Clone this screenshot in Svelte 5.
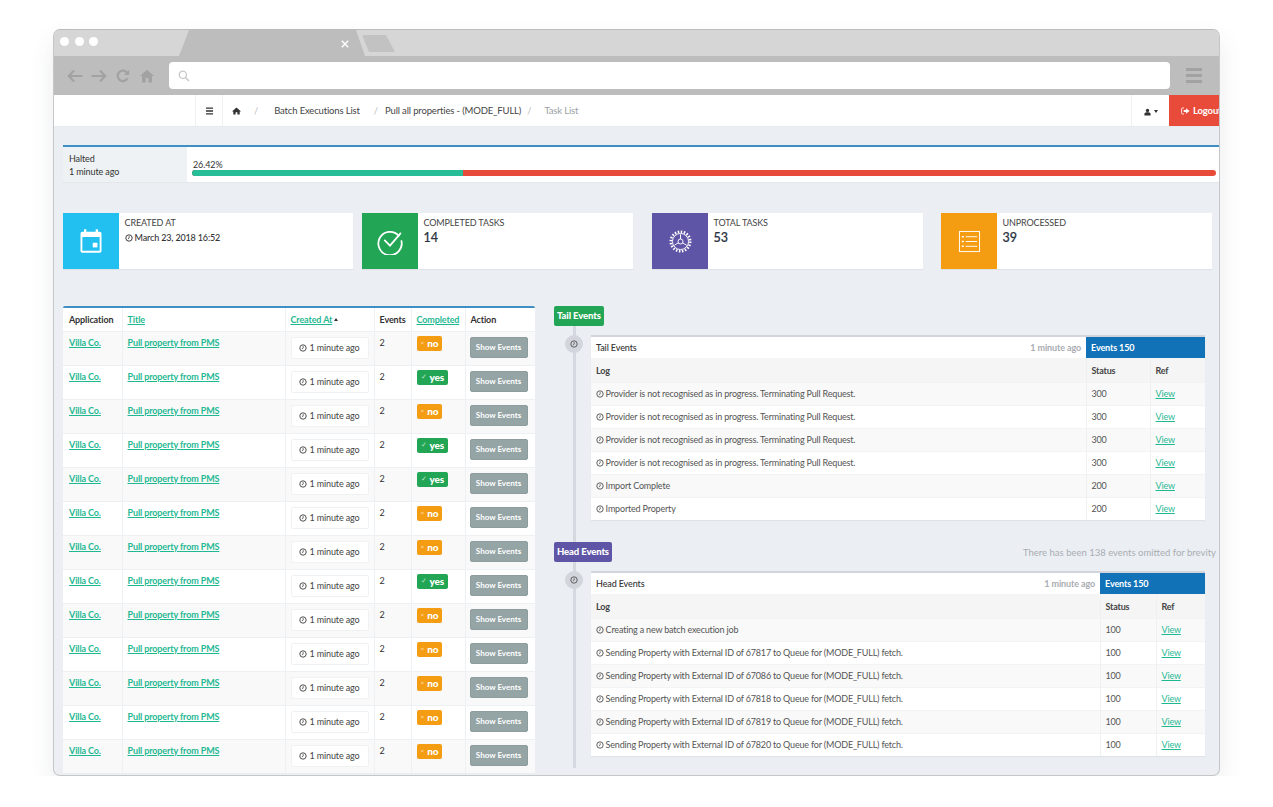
<script lang="ts">
  const stats = [
    { label: 'Completed Tasks', value: '14', tone: 'green', icon: 'check' },
    { label: 'Total Tasks', value: '53', tone: 'purple', icon: 'gear' },
    { label: 'Unprocessed', value: '39', tone: 'orange', icon: 'list' },
  ];

  const completed = [false, true, false, true, true, false, false, true, false, false, false, false, false];

  const terminating = 'Provider is not recognised as in progress. Terminating Pull Request.';
  const tailRows = [
    { log: terminating, status: 300 },
    { log: terminating, status: 300 },
    { log: terminating, status: 300 },
    { log: terminating, status: 300 },
    { log: 'Import Complete', status: 200 },
    { log: 'Imported Property', status: 200 },
  ];

  const sending = (id: number) => `Sending Property with External ID of ${id} to Queue for (MODE_FULL) fetch.`;
  const headRows = [
    { log: 'Creating a new batch execution job', status: 100 },
    { log: sending(67817), status: 100 },
    { log: sending(67086), status: 100 },
    { log: sending(67818), status: 100 },
    { log: sending(67819), status: 100 },
    { log: sending(67820), status: 100 },
  ];

  const events = [
    { title: 'Tail Events', tone: 'green', rows: tailRows, boxWidth: 119, statusWidth: 64, note: '' },
    { title: 'Head Events', tone: 'purple', rows: headRows, boxWidth: 105, statusWidth: 56, note: 'There has been 138 events omitted for brevity' },
  ];
</script>

{#snippet clock()}
  <svg class="clock" viewBox="0 0 12 12" aria-hidden="true">
    <circle cx="6" cy="6" r="4.8" fill="none" stroke="currentColor" stroke-width="1.4" />
    <path d="M6.2 3.2V6.2L4.3 7.6" fill="none" stroke="currentColor" stroke-width="1.2" />
  </svg>
{/snippet}

{#snippet eventPanel(ev)}
  <div class="panel">
    <div class="panel-head">
      <span class="panel-title">{ev.title}</span>
      <span class="panel-time">1 minute ago</span>
      <span class="panel-count" style="width: {ev.boxWidth}px">Events 150</span>
    </div>
    <table class="log-table">
      <colgroup>
        <col />
        <col style="width: {ev.statusWidth}px" />
        <col style="width: {ev.boxWidth - ev.statusWidth}px" />
      </colgroup>
      <thead>
        <tr><th>Log</th><th>Status</th><th>Ref</th></tr>
      </thead>
      <tbody>
        {#each ev.rows as row}
          <tr>
            <td>{@render clock()} {row.log}</td>
            <td>{row.status}</td>
            <td><a href="#view">View</a></td>
          </tr>
        {/each}
      </tbody>
    </table>
  </div>
{/snippet}

<div class="window">
  <div class="tabstrip">
    <div class="dots"><i></i><i></i><i></i></div>
    <div class="tab">
      <svg viewBox="0 0 10 10" aria-hidden="true"><path d="M1 1L9 9M9 1L1 9" stroke="#fff" stroke-width="1.8" /></svg>
    </div>
    <div class="newtab"></div>
  </div>

  <div class="toolbar">
    <div class="nav-icons">
      <svg viewBox="0 0 16 14" aria-hidden="true"><path d="M7 1.5L1.8 7L7 12.5M2 7H15.5" fill="none" stroke="#a2a2a2" stroke-width="2.2" /></svg>
      <svg viewBox="0 0 16 14" aria-hidden="true"><path d="M9 1.5L14.2 7L9 12.5M14 7H.5" fill="none" stroke="#a2a2a2" stroke-width="2.2" /></svg>
      <svg viewBox="0 0 14 14" aria-hidden="true"><path d="M11.6 9.2A5.2 5.2 0 1 1 11.2 3.8" fill="none" stroke="#a2a2a2" stroke-width="2.2" /><path d="M13.2.8V6H8Z" fill="#a2a2a2" /></svg>
      <svg viewBox="0 0 14 14" aria-hidden="true"><path d="M7 .8L14 7H12V13.4H8.4V9H5.6V13.4H2V7H0Z" fill="#a2a2a2" /></svg>
    </div>
    <div class="address">
      <svg viewBox="0 0 12 12" aria-hidden="true"><circle cx="4.8" cy="4.8" r="3.6" fill="none" stroke="#c9c9c9" stroke-width="1.3" /><path d="M7.5 7.5L11 11" stroke="#c9c9c9" stroke-width="1.6" /></svg>
    </div>
    <div class="burger"><i></i><i></i><i></i></div>
  </div>

  <nav class="topnav">
    <div class="brand"></div>
    <button class="toggle" aria-label="Menu">
      <svg viewBox="0 0 10 9" aria-hidden="true"><path d="M1 1.2H9M1 4.5H9M1 7.8H9" stroke="#333" stroke-width="1.5" /></svg>
    </button>
    <ol class="crumbs">
      <li class="home">
        <svg viewBox="0 0 14 12" aria-hidden="true"><path d="M7 .6L14 6.6H12V11.6H8.4V8H5.6V11.6H2V6.6H0Z" fill="#333" /></svg>
      </li>
      <li class="sep first">/</li>
      <li class="crumb">Batch Executions List</li>
      <li class="sep second">/</li>
      <li class="crumb">Pull all properties - (MODE_FULL)</li>
      <li class="sep third">/</li>
      <li class="crumb current">Task List</li>
    </ol>
    <div class="user">
      <svg viewBox="0 0 10 10" aria-hidden="true"><circle cx="5" cy="2.8" r="2.4" fill="#333" /><path d="M.6 10V7.4C.6 6 2 5.2 5 5.2S9.4 6 9.4 7.4V10Z" fill="#333" /></svg>
      <span class="caret"></span>
    </div>
    <div class="logout">
      <svg viewBox="0 0 12 10" aria-hidden="true"><path d="M4 1H2A1.2 1.2 0 0 0 .8 2.2V7.8A1.2 1.2 0 0 0 2 9H4" fill="none" stroke="#fff" stroke-width="1.1" /><path d="M3.6 3.6H6.6V1.2L11.4 5L6.6 8.8V6.4H3.6Z" fill="#fff" /></svg>
      Logout
    </div>
  </nav>

  <main class="content">
    <section class="progress-panel">
      <div class="progress-label">
        <div>Halted</div>
        <div>1 minute ago</div>
      </div>
      <div class="progress-body">
        <div class="percent">26.42%</div>
        <div class="bar"><div class="bar-done" style="width: 26.42%"></div></div>
      </div>
    </section>

    <section class="stats">
      <div class="stat">
        <div class="stat-icon blue">
          <svg class="big" viewBox="0 0 24 24" aria-hidden="true">
            <path d="M3 5.5A1.5 1.5 0 0 1 4.5 4H6V2H8V4H16V2H18V4H19.5A1.5 1.5 0 0 1 21 5.5V20.5A1.5 1.5 0 0 1 19.5 22H4.5A1.5 1.5 0 0 1 3 20.5ZM4.6 8.5V20.4H19.4V8.5Z" fill="#fff" />
            <rect x="13.5" y="13.5" width="4" height="4" fill="#fff" />
          </svg>
        </div>
        <div class="stat-text">
          <div class="stat-label">Created At</div>
          <div class="stat-date">{@render clock()} March 23, 2018 16:52</div>
        </div>
      </div>

      {#each stats as stat}
        <div class="stat">
          <div class="stat-icon {stat.tone}">
            {#if stat.icon === 'check'}
              <svg class="big" viewBox="0 0 24 24" aria-hidden="true">
                <path d="M19.5 7.5A10 10 0 1 0 21.8 12" fill="none" stroke="#fff" stroke-width="1.5" stroke-linecap="round" />
                <path d="M7.5 11.5L12 16L21 5.5" fill="none" stroke="#fff" stroke-width="1.5" stroke-linecap="round" />
              </svg>
            {:else if stat.icon === 'gear'}
              <svg viewBox="0 0 24 24" aria-hidden="true">
                <circle cx="12" cy="12" r="10.2" fill="none" stroke="#fff" stroke-width="2.6" stroke-dasharray="1.6 1.6" />
                <circle cx="12" cy="12" r="8.4" fill="none" stroke="#fff" stroke-width="1" />
                <path d="M12 12V4.5M12 12L5.5 16M12 12L18.5 16" fill="none" stroke="#fff" stroke-width="1" />
                <circle cx="12" cy="12" r="2.6" fill="#5f55a7" stroke="#fff" stroke-width="1" />
              </svg>
            {:else}
              <svg viewBox="0 0 24 24" aria-hidden="true">
                <rect x="1.5" y="1.5" width="21" height="21" fill="none" stroke="#fff" stroke-width="1" />
                <path d="M8 7H20M8 12H20M8 17H20" stroke="#fff" stroke-width="1" />
                <path d="M4 7H6M4 12H6M4 17H6" stroke="#fff" stroke-width="1.4" />
              </svg>
            {/if}
          </div>
          <div class="stat-text">
            <div class="stat-label">{stat.label}</div>
            <div class="stat-value">{stat.value}</div>
          </div>
        </div>
      {/each}
    </section>

    <section class="columns">
      <div class="tasks">
        <table class="task-table">
          <colgroup>
            <col style="width: 59px" />
            <col style="width: 163px" />
            <col style="width: 89px" />
            <col style="width: 37px" />
            <col style="width: 54px" />
            <col style="width: 70px" />
          </colgroup>
          <thead>
            <tr>
              <th>Application</th>
              <th><a href="#title">Title</a></th>
              <th><a href="#created">Created At</a><span class="sort"></span></th>
              <th>Events</th>
              <th><a href="#completed">Completed</a></th>
              <th>Action</th>
            </tr>
          </thead>
          <tbody>
            {#each completed as done}
              <tr>
                <td><a class="strong" href="#app">Villa Co.</a></td>
                <td><a class="strong" href="#task">Pull property from PMS</a></td>
                <td><span class="chip">{@render clock()} 1 minute ago</span></td>
                <td>2</td>
                <td>
                  {#if done}
                    <span class="flag yes"><small>✓</small>yes</span>
                  {:else}
                    <span class="flag no"><small>×</small>no</span>
                  {/if}
                </td>
                <td><button class="show">Show Events</button></td>
              </tr>
            {/each}
          </tbody>
        </table>
      </div>

      <div class="timeline">
        <div class="line"></div>
        {#each events as ev}
          <div class="event-block">
            <div class="event-top">
              <span class="event-badge {ev.tone}">{ev.title}</span>
              {#if ev.note}<span class="note">{ev.note}</span>{/if}
            </div>
            <div class="event-item">
              <span class="node">{@render clock()}</span>
              {@render eventPanel(ev)}
            </div>
          </div>
        {/each}
      </div>
    </section>
  </main>
</div>

<style>
  :global(body) {
    background: #fff;
    font-family: Lato, 'Open Sans', sans-serif;
    color: #333;
  }

  .window {
    box-sizing: border-box;
    width: 1167px;
    height: 747px;
    margin: 29px 0 0 53px;
    border: 1px solid #c6c6c6;
    border-top-color: #bbb;
    border-radius: 7px;
    overflow: hidden;
    background: #ebeff4;
    box-shadow: 0 12px 24px rgba(60, 70, 90, 0.1);
    font-size: 9px;
    letter-spacing: -0.12px;
  }

  .tabstrip {
    display: flex;
    height: 26px;
    background: #d6d6d6;
  }

  .dots {
    display: flex;
    gap: 5.5px;
    width: 124px;
    padding: 7px 0 0 6px;
    box-sizing: content-box;
  }

  .dots i {
    width: 9px;
    height: 9px;
    border-radius: 50%;
    background: #fff;
  }

  .tab {
    display: flex;
    justify-content: flex-end;
    width: 186px;
    height: 26px;
    margin-left: -5px;
    background: #bdbdbd;
    clip-path: polygon(0 100%, 10px 0, 177px 0, 186px 100%);
  }

  .tab svg {
    width: 8px;
    height: 8px;
    margin: 10px 16px 0 0;
  }

  .newtab {
    width: 33px;
    height: 17px;
    margin: 5px 0 0 -3px;
    background: #c2c2c2;
    border-radius: 2px;
    clip-path: polygon(0 0, 24px 0, 33px 100%, 7px 100%);
  }

  .toolbar {
    display: flex;
    align-items: center;
    height: 39px;
    background: #bdbdbd;
  }

  .nav-icons {
    display: flex;
    align-items: center;
    gap: 8px;
    width: 115px;
    padding-left: 13px;
    box-sizing: border-box;
  }

  .nav-icons svg {
    width: 16px;
    height: 14px;
  }

  .address {
    display: flex;
    align-items: center;
    flex: 1;
    height: 27px;
    padding-left: 9px;
    background: #fff;
    border-radius: 4px;
  }

  .address svg {
    width: 12px;
    height: 12px;
  }

  .burger {
    display: flex;
    flex-direction: column;
    gap: 3px;
    width: 16px;
    margin: 0 17px 0 16px;
  }

  .burger i {
    height: 3px;
    background: #a2a2a2;
  }

  .topnav {
    display: flex;
    align-items: center;
    height: 32px;
    background: #fff;
    border-bottom: 1px solid #e6e9ee;
    box-sizing: border-box;
    font-size: 9.5px;
    letter-spacing: -0.15px;
  }

  .brand {
    width: 141px;
    height: 100%;
  }

  .toggle {
    display: flex;
    align-items: center;
    justify-content: center;
    width: 28px;
    height: 100%;
    padding: 0;
    background: none;
    border: 0;
    border-left: 1px solid #eef0f3;
    border-right: 1px solid #eef0f3;
  }

  .toggle svg {
    width: 9px;
    height: 8px;
  }

  .crumbs {
    display: flex;
    align-items: center;
    flex: 1;
    margin: 0;
    padding: 0 0 0 9px;
    list-style: none;
  }

  .home {
    display: flex;
  }

  .home svg {
    width: 9px;
    height: 8px;
  }

  .sep {
    color: #bbb;
  }

  .sep.first {
    margin: 0 16px 0 13px;
  }

  .sep.second {
    margin: 0 7px 0 14px;
  }

  .sep.third {
    margin: 0 13px 0 6px;
  }

  .crumb {
    color: #444;
  }

  .crumb.current {
    color: #9a9fa5;
  }

  .user {
    display: flex;
    align-items: center;
    justify-content: center;
    gap: 3px;
    width: 37px;
    height: 100%;
    border-left: 1px solid #eef0f3;
  }

  .user svg {
    width: 7px;
    height: 8px;
    margin-top: 3px;
  }

  .caret {
    margin-top: 2px;
    border-top: 3px solid #333;
    border-left: 2.5px solid transparent;
    border-right: 2.5px solid transparent;
  }

  .logout {
    display: flex;
    align-items: center;
    flex: none;
    gap: 3px;
    width: 50px;
    height: 100%;
    padding-left: 12px;
    box-sizing: border-box;
    background: #e94b3a;
    color: #fff;
    font-weight: 700;
    white-space: nowrap;
    overflow: hidden;
  }

  .logout svg {
    width: 9px;
    height: 8px;
    flex: none;
  }

  .content {
    padding: 18px 0 0 9px;
  }

  .progress-panel {
    display: flex;
    height: 38px;
    background: #fff;
    border-top: 2px solid #3f8fc4;
    border-bottom: 1px solid #e3e7ec;
    box-sizing: border-box;
  }

  .progress-label {
    width: 124px;
    padding: 6px 0 0 6px;
    box-sizing: border-box;
    background: #eef2f4;
    color: #333;
    line-height: 12.5px;
  }

  .progress-body {
    flex: 1;
    padding: 12px 3px 0 5px;
  }

  .percent {
    padding-left: 1px;
    line-height: 11px;
  }

  .bar {
    height: 6px;
    overflow: hidden;
    background: #e94b3a;
    border-radius: 3px;
  }

  .bar-done {
    height: 100%;
    background: #26bd97;
  }

  .stats {
    display: flex;
    margin-top: 30px;
  }

  .stat {
    display: flex;
    flex: none;
    width: 271px;
    height: 56px;
    margin-right: 19px;
    background: #fff;
    box-shadow: 0 1px 1px rgba(0, 0, 0, 0.05);
  }

  .stat:first-child {
    width: 290px;
    margin-right: 9px;
  }

  .stat:nth-child(3) {
    margin-right: 18px;
  }

  .stat-icon {
    display: flex;
    align-items: center;
    justify-content: center;
    flex: none;
    width: 56px;
  }

  .stat-icon svg {
    width: 23px;
    height: 23px;
  }

  .stat-icon svg.big {
    width: 28px;
    height: 28px;
  }

  .stat-text {
    padding: 4px 0 0 5.5px;
  }

  .stat-label {
    color: #444;
    line-height: 11px;
    text-transform: uppercase;
  }

  .stat-date {
    margin-top: 4px;
    color: #333;
    font-weight: 500;
    letter-spacing: -0.15px;
  }

  .stat-value {
    margin-top: 3px;
    color: #2b3440;
    font-size: 12.5px;
    font-weight: 500;
    line-height: 14px;
    -webkit-text-stroke: 0.2px #2b3440;
  }

  .blue { background: #22c0f0; }
  .green { background: #22a655; }
  .purple { background: #5f55a7; }
  .orange { background: #f49c12; }

  .columns {
    display: flex;
    align-items: flex-start;
    gap: 19px;
    margin-top: 37px;
  }

  .tasks {
    flex: none;
    width: 472px;
    background: #fff;
    border-top: 2px solid #3f8fc4;
    border-radius: 2px 2px 0 0;
  }

  .task-table {
    width: 100%;
    table-layout: fixed;
    border-collapse: collapse;
  }

  .task-table th {
    height: 23px;
    padding: 0 5px;
    color: #333;
    font-weight: 700;
    text-align: left;
    white-space: nowrap;
    box-sizing: border-box;
  }

  .task-table th,
  .task-table td {
    border-right: 1px solid #eef1f3;
  }

  .task-table th:first-child,
  .task-table td:first-child {
    padding-left: 6px;
  }

  .task-table th:last-child,
  .task-table td:last-child {
    border-right: 0;
  }

  .task-table td {
    height: 34px;
    padding: 5px 5px 0;
    border-top: 1px solid #eef1f3;
    box-sizing: border-box;
    vertical-align: top;
    white-space: nowrap;
    line-height: 12px;
  }

  .task-table tbody tr:nth-child(odd) {
    background: #f9f9f9;
  }

  a {
    color: #1fb893;
    text-decoration: underline;
  }

  a.strong {
    font-weight: 700;
  }

  .sort {
    display: inline-block;
    margin-left: 2px;
    vertical-align: 2px;
    border-bottom: 3px solid #333;
    border-left: 2.5px solid transparent;
    border-right: 2.5px solid transparent;
  }

  .chip {
    display: flex;
    align-items: center;
    justify-content: center;
    gap: 2px;
    width: 78px;
    height: 22px;
    margin: 0;
    box-sizing: border-box;
    background: #fff;
    border: 1px solid #f0f1f3;
    border-radius: 2px;
    color: #444;
  }

  .flag {
    display: flex;
    align-items: center;
    width: fit-content;
    height: 15px;
    margin-top: -1px;
    padding: 0 4px;
    border-radius: 2px;
    color: #fff;
    font-size: 10px;
    font-weight: 900;
  }

  .flag small {
    margin-right: 3px;
    font-size: 6.5px;
    font-weight: 400;
    opacity: 0.7;
  }

  .flag.no {
    background: #f49c12;
  }

  .flag.yes {
    background: #22a655;
  }

  .show {
    display: block;
    width: 58px;
    height: 21px;
    margin-left: -1px;
    padding: 0;
    background: #95a5a6;
    border: 1px solid #8d9d9e;
    border-radius: 2px;
    color: #fff;
    font: 700 8px Lato, sans-serif;
  }

  .timeline {
    position: relative;
    flex: none;
    width: 662px;
  }

  .line {
    position: absolute;
    top: 20px;
    left: 19px;
    width: 3px;
    height: 442px;
    background: #d5d9df;
  }

  .event-block {
    position: relative;
    margin-bottom: 22px;
  }

  .event-top {
    display: flex;
    align-items: center;
    justify-content: space-between;
  }

  .event-badge {
    padding: 0 3px;
    border-radius: 2px;
    color: #fff;
    font-size: 9.5px;
    font-weight: 900;
    line-height: 20px;
  }

  .note {
    color: #a9adb2;
    font-size: 9.5px;
    letter-spacing: 0;
  }

  .event-item {
    position: relative;
    margin: 9px 11px 0 37px;
  }

  .node {
    position: absolute;
    top: 0;
    left: -26px;
    display: flex;
    align-items: center;
    justify-content: center;
    width: 18px;
    height: 18px;
    background: #d2d6dc;
    border-radius: 50%;
    color: #555;
  }

  .panel {
    background: #fff;
    border-top: 2px solid #d2d6dc;
    box-shadow: 0 1px 1px rgba(0, 0, 0, 0.05);
  }

  .panel-head {
    display: flex;
    align-items: center;
    height: 21px;
  }

  .panel-title {
    flex: 1;
    padding-left: 5px;
    color: #333;
    font-weight: 500;
  }

  .panel-time {
    padding-right: 5px;
    color: #a9adb2;
    font-weight: 700;
  }

  .panel-count {
    align-self: stretch;
    display: flex;
    align-items: center;
    padding-left: 5px;
    box-sizing: border-box;
    background: #1172b8;
    color: #fff;
    font-weight: 700;
  }

  .log-table {
    width: 100%;
    table-layout: fixed;
    border-collapse: collapse;
    color: #555;
    letter-spacing: -0.18px;
  }

  .log-table th {
    height: 24px;
    padding: 2px 5px 0;
    box-sizing: border-box;
    background: #f5f5f5;
    color: #444;
    font-weight: 700;
    text-align: left;
  }

  .log-table td {
    height: 23px;
    padding: 0 5px;
    box-sizing: border-box;
    border-top: 1px solid #f1f3f4;
    white-space: nowrap;
  }

  .log-table td:first-child {
    padding-left: 4.5px;
  }

  .log-table td + td,
  .log-table th + th {
    border-left: 1px solid #eef1f3;
  }

  .log-table tbody tr:nth-child(odd) {
    background: #f9f9f9;
  }

  .clock {
    display: inline-block;
    width: 8px;
    height: 8px;
    vertical-align: -1px;
  }
</style>
